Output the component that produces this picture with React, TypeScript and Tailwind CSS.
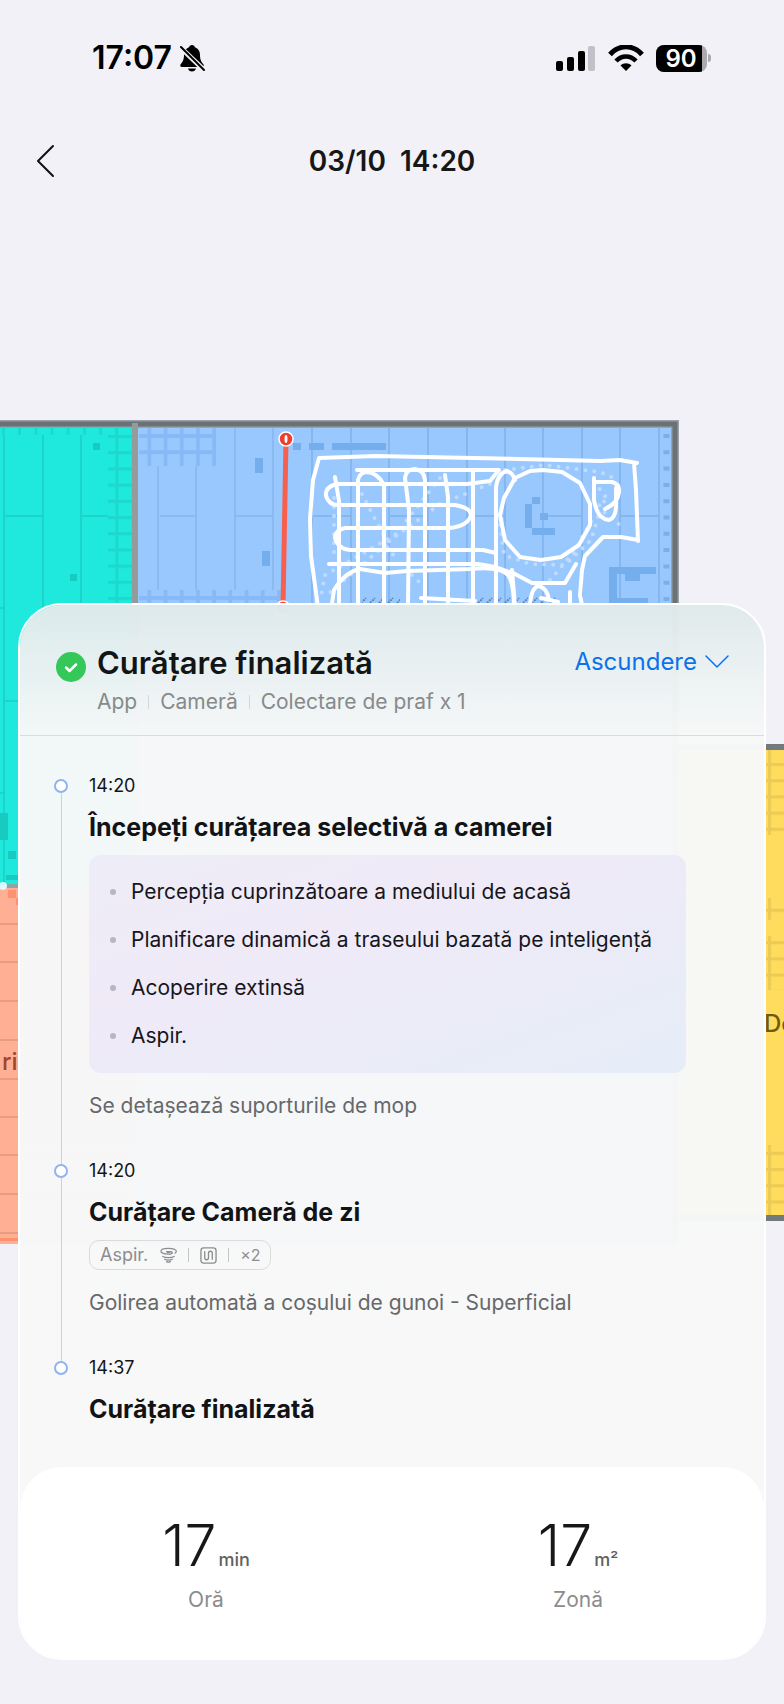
import React from 'react'

const BLUE_SEAMS = [312, 351, 389, 428, 467, 505, 543, 582, 620, 659]
const CORAL_SEAMS = [924, 962, 1001, 1040, 1079, 1117, 1155, 1194, 1233]

const FloorMap = () => {
  return (
    <svg
      viewBox="0 0 784 1704"
      className="pointer-events-none absolute inset-x-0 top-0 w-full"
      aria-hidden="true"
      fill="none"
    >
      <defs>
        <pattern id="tealTiles" x="102" y="435" width="16.2" height="16.2" patternUnits="userSpaceOnUse">
          <path d="M0 1.5h16.2M15 0v16.2" stroke="#1dd8cd" strokeWidth="3" />
        </pattern>
        <pattern id="blueTiles" x="135" y="434" width="16.2" height="16.2" patternUnits="userSpaceOnUse">
          <path d="M0 2h16.2M14.5 0v16.2" stroke="#88b9f7" strokeWidth="4" />
        </pattern>
        <pattern id="yellowTiles" x="768" y="763" width="16.2" height="16.2" patternUnits="userSpaceOnUse">
          <path d="M0 1.5h16.2M1.5 0v16.2" stroke="#eccb54" strokeWidth="3" />
        </pattern>
        <pattern id="rug" x="0" y="597" width="9" height="8" patternUnits="userSpaceOnUse">
          <path d="M1 6l5-5" stroke="#5d83b5" strokeWidth="2" strokeDasharray="2 1" />
        </pattern>
      </defs>

      {/* teal room */}
      <rect x="0" y="424" width="136" height="465" fill="#1fe8dc" />
      <rect x="0" y="426" width="132" height="9" fill="url(#tealTiles)" />
      <rect x="108" y="426" width="26" height="180" fill="url(#tealTiles)" />
      <path d="M4 435v450M43 435v260M81 435v260M5 516h37M82 516h26M0 608h4M5 701h14M0 793h4" stroke="#1bcdc3" strokeWidth="1.5" />
      <path d="M93 443h7v7h-7zM70 574h7v7h-7zM0 813h8v27H0zM8 851h8v8H8zM6 875h12v5H6z" fill="#18cbc0" />

      {/* coral room */}
      <rect x="0" y="888" width="136" height="356" fill="#ffb094" />
      {CORAL_SEAMS.map((y) => (
        <path key={y} d={`M0 ${y}h130`} stroke="#ea9c81" strokeWidth="2" />
      ))}
      <path d="M8 890h8v8H8zM16 898h4v7h-4zM0 1238h20v3H0z" fill="#ff9170" />
      <circle cx="3" cy="886" r="4" fill="#dff6ff" />
      <path d="M7 886h12" stroke="#8fa5a5" strokeWidth="4" />
      <text x="2" y="1070" fill="#a3452c" fontSize="24" fontWeight="500" fontFamily="Inter, sans-serif">ri</text>

      {/* yellow room */}
      <rect x="678" y="747" width="106" height="471" fill="#ffdb5e" />
      <path d="M764 750h20v85h-20zM764 898h20v22h-20zM764 936h20v54h-20zM764 1145h20v70h-20z" fill="url(#yellowTiles)" />
      <path d="M678 747h106M678 1218h106" stroke="#737a7c" strokeWidth="6" />
      <text x="764" y="1032" fill="#705a10" fontSize="24" fontWeight="500" fontFamily="Inter, sans-serif">Do</text>

      {/* blue room */}
      <rect x="136" y="424" width="540" height="820" fill="#99c8ff" />
      <rect x="139" y="427" width="77" height="39" fill="url(#blueTiles)" />
      <rect x="139" y="590" width="142" height="14" fill="url(#blueTiles)" />
      <path d="M158 466v124M196 466v124M235 427v163M273 427v163M160 516h36M235 516h38" stroke="#86b5ee" strokeWidth="1.5" />
      {BLUE_SEAMS.map((x) => (
        <path key={x} d={`M${x} 427v180`} stroke="#81b0e8" strokeWidth="1.5" />
      ))}
      <path d="M313 516h38M390 516h38M467 516h38M544 516h38M621 516h38" stroke="#81b0e8" strokeWidth="1.5" />
      <path d="M666.5 434v180" stroke="#7daee8" strokeWidth="6" strokeDasharray="4 12.3" />
      <path
        d="M255 458h8v15h-8zM262 551h8v15h-8zM293 443h8v7h-8zM309 443h15v7h-15zM332 443h54v7h-54zM532 497h8v7h-8zM525 504h7v24h-7zM540 513h8v7h-8zM532 528h23v7h-23zM609 567h47v7h-47zM609 574h8v32h-8zM625 574h15v7h-15zM617 598h31v6h-31z"
        fill="#74aeec"
      />
      <rect x="362" y="597" width="38" height="8" fill="url(#rug)" />
      <rect x="475" y="597" width="82" height="8" fill="url(#rug)" />

      {/* walls */}
      <path d="M0 424h675v820" stroke="#9aa1a8" strokeWidth="8" />
      <path d="M0 424h675v820" stroke="#6b7275" strokeWidth="5" />
      <path d="M135 423v465" stroke="#959a9b" strokeWidth="6" />

      {/* dotted transfer moves */}
      <g stroke="#bfdcff" strokeWidth="4" strokeLinecap="round" strokeDasharray="0 9">
        <path d="M334 498v62M362 494l21 40M440 478l-45 57-70 40-5 26" />
        <path d="M490 484l-50 20-55 40 10 13M385 545l-58 50M412 575l14 14" />
        <path d="M505 470l40-5 55 7 18 8M500 525l4 30 26 9 35 1 26-25 8-26M550 580l24-28 18-32" />
        <path d="M594 482l8 10 6 8-10 4M594 498l10 14 17 14" />
      </g>

      {/* cleaning path */}
      <g stroke="#ffffff" strokeWidth="4" strokeLinejoin="round" strokeLinecap="round">
        <path d="M318 610l-1-10-6-44-1-37 3-39 6-22 57-2 144 3 80 2 20-1 17 3M634 463l2 27 2 51M638 540l-17-3h-18l-18 19-3 14-2 25 3 15" />
        <path d="M357 470h142l-9 11-23 3H338Q325 486 326 496Q329 505 338 505H455Q471 508 471 515Q468 526 450 528H345Q335 530 335 538Q338 549 350 550H483l13 3" />
        <path d="M329 564h149l17 3 20 7 17 9h33l11-19" />
        <path d="M331 610l3-20Q345 572 360 569l25 4 22-2 63-2Q500 566 508 575Q514 584 514 606" />
        <path d="M335 477l4 24v105M358 606V480Q360 472 367 472Q378 473 384 485V606M408 606l1-96-4-32Q406 469 415 469Q424 470 425 480V606M445 475l3 22v109M473 470v136M496 606V487Q498 473 507 471Q513 473 515 480" />
        <path d="M515 478l15-7 13-1 19 2 18 11 10 21v21l-11 20-18 12-20 3-21-3-15-17-5-25 4-17z" />
        <path d="M594 478v22Q597 519 609 520Q616 518 616 505V488M595 482h17Q620 484 619 492Q618 503 605 509" />
        <path d="M512 570l3 36M530 606Q531 587 539 586Q547 588 549 600M570 592v14M421 598l54 3M541 598l17 4" />
      </g>

      {/* virtual wall */}
      <path d="M286 440l-3 166" stroke="#f7604e" strokeWidth="5" />
      <circle cx="286" cy="439" r="7" fill="#ef3d2e" stroke="#fff" strokeWidth="1.5" />
      <ellipse cx="286" cy="439" rx="1.5" ry="4" fill="#fff" />
      <circle cx="283" cy="608" r="7" fill="#ef3d2e" stroke="#fff" strokeWidth="1.5" />
    </svg>
  )
}

const BellOffIcon = () => (
  <svg width="26" height="28" viewBox="0 0 26 28" fill="none" aria-label="Silențios">
    <path d="M13 1c1.6 0 2.7 1 3 2.3 3.3 1.2 5 4 5 7.7 0 5 1.5 7 3.5 9.5.8 1.5 0 2.5-1.5 2.5H3c-1.5 0-2.3-1-1.5-2.5C3.5 18 5 16 5 11c0-3.700 1.700-6.500 5-7.700C10.300 2 11.400 1 13 1zM9 24.500h8c-.5 1.800-2 3-4 3s-3.500-1.200-4-3z" fill="#000" />
    <path d="M1 3l24 23" stroke="#f2f1f7" strokeWidth="5" />
    <path d="M2 3l23 23" stroke="#000" strokeWidth="2" strokeLinecap="round" />
  </svg>
)

const StatusBar = () => (
  <div className="flex h-[116px] items-center justify-between pr-[73px] pl-[92px]">
    <div className="flex items-center gap-[7px]">
      <span className="text-[32px] leading-10 font-semibold text-black">17:07</span>
      <BellOffIcon />
    </div>
    <div className="flex items-center gap-3">
      <svg width="40" height="26" viewBox="0 0 40 26" aria-label="Semnal">
        <rect x="0" y="16" width="7" height="10" rx="2" />
        <rect x="11" y="12" width="7" height="14" rx="2" />
        <rect x="22" y="6" width="7" height="20" rx="2" />
        <rect x="32" y="1" width="7" height="25" rx="2" fill="#c2c1c7" />
      </svg>
      <svg width="36" height="26" viewBox="0 0 36 26" fill="none" aria-label="Wi-Fi">
        <path d="M2 9.5C11-.7 25-.7 34 9.5" stroke="#000" strokeWidth="5" />
        <path d="M8 16c5.7-6 14.3-6 20 0" stroke="#000" strokeWidth="4.5" />
        <path d="M18 26l-5.500-5.500c3-3 8-3 11 0z" fill="#000" />
      </svg>
      <div className="flex items-center gap-px">
        <div className="flex h-[27px] w-[51px] overflow-hidden rounded-lg bg-[#a9a9ae]">
          <span className="w-[46px] bg-black pl-1 text-center text-[24px] leading-[27px] font-semibold text-white">90</span>
        </div>
        <span className="h-2 w-[3px] rounded-r-full bg-[#a9a9ae]" />
      </div>
    </div>
  </div>
)

const SuctionIcon = () => (
  <svg width="17" height="16" viewBox="0 0 18 16" fill="none" stroke="#8b8d8f" strokeWidth="1.3" strokeLinecap="round">
    <path d="M7 4.500c1 .9 3 .9 5 0M16 6c1-.6 1.300-1.200 1.300-2C17.300 2 13.500 1 9 1S1 2 1 4s4 3 8 3c2.500 0 4-.7 4-1.500S11 4 7 4.500" />
    <path d="M3 9.500c2.500 1.600 9.500 1.600 12 0M5 12.500c2 1.300 6 1.300 8 0M7 15c1 .5 3 .5 4 0" />
  </svg>
)

const RouteIcon = () => (
  <svg width="17" height="17" viewBox="0 0 18 18" fill="none" stroke="#8b8d8f" strokeWidth="1.4" strokeLinecap="round">
    <rect x="1" y="1" width="16" height="16" rx="3" />
    <path d="M5 5v6.500q0 2 2 2t2-2v-5q0-2 2-2t2 2V13" />
  </svg>
)

interface TimelineStepProps {
  time: string
  title: string
  last?: boolean
  children?: React.ReactNode
}

const TimelineStep = ({ time, title, last = false, children }: TimelineStepProps) => (
  <li className="flex gap-[21px]">
    <div className="flex w-[14px] shrink-0 flex-col items-center">
      <span className="size-[14px] shrink-0 rounded-full border-2 border-[#8fb3f2] bg-white" />
      {!last && <span className="w-px grow bg-[#cfd0d3]" />}
    </div>
    <div className="min-w-0 grow">
      <time className="block text-[18px] leading-[14px] text-[#141517]">{time}</time>
      <h2 className="mt-[18px] text-[25px] leading-8 font-bold text-[#121314]">{title}</h2>
      {children}
    </div>
  </li>
)

const FEATURES = [
  'Percepția cuprinzătoare a mediului de acasă',
  'Planificare dinamică a traseului bazată pe inteligență',
  'Acoperire extinsă',
  'Aspir.',
]

interface StatProps {
  value: string
  unit: React.ReactNode
  label: string
}

const Stat = ({ value, unit, label }: StatProps) => (
  <div className="flex flex-col items-center">
    <dd className="flex items-baseline gap-[2px]">
      <span className="text-[57px] leading-[60px] font-light text-[#161718]">{value}</span>
      <span className="text-[18px] font-medium text-[#5f6163]">{unit}</span>
    </dd>
    <dt className="mt-[10px] text-[21px] leading-7 text-[#8c8c8c]">{label}</dt>
  </div>
)

const App = () => {
  return (
    <main className="relative min-h-screen overflow-hidden bg-[#f2f1f7] pb-[43px] font-['Inter','Liberation_Sans',sans-serif]">
      <FloorMap />

      <div className="relative">
        <StatusBar />
        <header className="grid h-[90px] grid-cols-[1fr_auto_1fr] items-center px-8">
          <button type="button" aria-label="Înapoi" className="justify-self-start p-1">
            <svg width="20" height="34" viewBox="0 0 20 34" fill="none" stroke="#111" strokeWidth="2" strokeLinecap="round" strokeLinejoin="round">
              <path d="M17 2L2 17l15 15" />
            </svg>
          </button>
          <h1 className="text-[28px] leading-9 font-semibold whitespace-pre text-[#161718]">03/10  14:20</h1>
        </header>

        <section className="mx-[18px] mt-[397px] rounded-[44px] border-2 border-white bg-linear-to-b from-[#dfeaeb]/98 via-[#f7f8f8]/98 via-[130px] to-[#f8f8f8]/98 bg-clip-padding">
          <div className="flex items-start justify-between border-b border-[#d9dcdd] pt-[37px] pr-[35px] pb-[17px] pl-9">
            <div className="flex gap-[11px]">
              <svg width="30" height="30" viewBox="0 0 30 30" fill="none" className="mt-[10px] shrink-0" aria-hidden="true">
                <circle cx="15" cy="15" r="15" fill="#34c759" />
                <path d="M10 15.5l3.5 3.5 6.5-6.5" stroke="#fff" strokeWidth="2.5" strokeLinecap="round" strokeLinejoin="round" />
              </svg>
              <div>
                <h2 className="text-[31px] leading-[42px] font-semibold text-[#121516]">Curățare finalizată</h2>
                <p className="mt-[2px] flex items-center text-[21px] leading-8 text-[#868a8b]">
                  <span>App</span>
                  <span className="mx-[11px] h-[14px] w-px bg-[#d5d8d9]" />
                  <span>Cameră</span>
                  <span className="mx-[11px] h-[14px] w-px bg-[#d5d8d9]" />
                  <span>Colectare de praf x 1</span>
                </p>
              </div>
            </div>
            <button type="button" className="flex items-center gap-2 text-[24px] leading-10 text-[#0a72ed]">
              Ascundere
              <svg width="24" height="14" viewBox="0 0 24 14" fill="none" stroke="currentColor" strokeWidth="1.5" strokeLinecap="round" strokeLinejoin="round">
                <path d="M1 1l11 11L23 1" />
              </svg>
            </button>
          </div>

          <ol className="pt-[43px] pr-[78px] pb-[42px] pl-[34px]">
            <TimelineStep time="14:20" title="Începeți curățarea selectivă a camerei">
              <ul className="mt-3 rounded-xl bg-linear-to-br from-[#ededf8] via-[#f0eaf7] via-35% to-[#e5edf8] py-[13px]">
                {FEATURES.map((feature) => (
                  <li key={feature} className="flex h-12 items-center gap-[15px] pl-[21px] text-[21px] leading-8 whitespace-nowrap text-[#17161c]">
                    <span className="size-[6px] shrink-0 rounded-full bg-[#b9b5c2]" />
                    {feature}
                  </li>
                ))}
              </ul>
              <p className="mt-[17px] mb-[42px] text-[21px] leading-8 text-[#66686a]">Se detașează suporturile de mop</p>
            </TimelineStep>
            <TimelineStep time="14:20" title="Curățare Cameră de zi">
              <div className="mt-3 flex h-[30px] w-fit items-center rounded-[10px] border border-[#d9dbdc] px-[10px] text-[18px] leading-7 text-[#8b8d8f]">
                <span className="mr-3">Aspir.</span>
                <SuctionIcon />
                <span className="mx-[11px] h-[14px] w-px bg-[#c3c5c7]" />
                <RouteIcon />
                <span className="mx-[11px] h-[14px] w-px bg-[#c3c5c7]" />
                <span className="text-[16px]">×2</span>
              </div>
              <p className="mt-[17px] mb-[42px] text-[21px] leading-8 text-[#66686a]">Golirea automată a coșului de gunoi - Superficial</p>
            </TimelineStep>
            <TimelineStep time="14:37" title="Curățare finalizată" last />
          </ol>

          <dl className="grid grid-cols-2 rounded-[42px] bg-white pt-[49px] pb-[44px]">
            <Stat value="17" unit="min" label="Oră" />
            <Stat value="17" unit="m²" label="Zonă" />
          </dl>
        </section>
      </div>
    </main>
  )
}

export default App
